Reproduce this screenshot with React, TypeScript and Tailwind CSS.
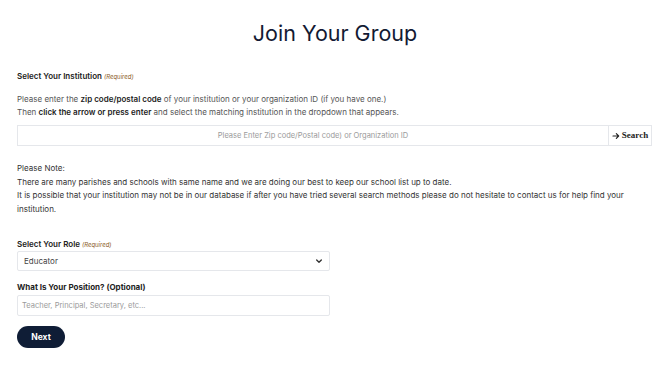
import React from "react";

export default function App() {
  return (
    <div className="w-[670px] h-[375px] bg-white overflow-hidden" style={{ fontFamily: "Inter, 'Noto Sans', sans-serif" }}>
      <div className="px-[17px]">
        <h1 className="text-center text-[21.5px] leading-[28px] text-[#131a33] pt-[19px]">Join Your Group</h1>
        <div className="mt-[23px] text-[8px] font-semibold text-[#222] leading-[12px]">
          Select Your Institution <span className="italic font-normal text-[6px] text-[#8a5a1c]">(Required)</span>
        </div>
        <div className="mt-[10px] text-[8px] leading-[13px] text-[#555]">
          <div>Please enter the <span className="font-semibold text-[#222]">zip code/postal code</span> of your institution or your organization ID (if you have one.)</div>
          <div>Then <span className="font-semibold text-[#222]">click the arrow or press enter</span> and select the matching institution in the dropdown that appears.</div>
        </div>
        <div className="mt-[6px] flex w-[635px] h-[21px]">
          <div className="flex-1 border border-[#e5e7eb] flex items-center justify-center text-[7.5px] text-[#9a9a9a]">
            Please Enter Zip code/Postal code) or Organization ID
          </div>
          <div className="w-[43px] border border-l-0 border-[#e5e7eb] flex items-center justify-center gap-[2px] text-[9px] font-bold text-[#222]" style={{ fontFamily: "'Liberation Serif', serif" }}>
            <svg width="8" height="8" viewBox="0 0 24 24" fill="none" stroke="#222" strokeWidth="3.5" strokeLinecap="round" strokeLinejoin="round"><path d="M3 12h17M13 5l7 7-7 7" /></svg>
            <span>Search</span>
          </div>
        </div>
        <div className="mt-[16px] text-[8px] leading-[13.5px] text-[#333]">
          <div>Please Note:</div>
          <div>There are many parishes and schools with same name and we are doing our best to keep our school list up to date.</div>
          <div className="w-[620px]">It is possible that your institution may not be in our database if after you have tried several search methods please do not hesitate to contact us for help find your institution.</div>
        </div>
        <div className="mt-[22px] text-[8px] font-semibold text-[#222] leading-[12px]">
          Select Your Role <span className="italic font-normal text-[6px] text-[#8a5a1c]">(Required)</span>
        </div>
        <div className="mt-0 w-[313px] h-[20px] border border-[#e5e7eb] rounded-[2px] flex items-center justify-between px-[6px] text-[8px] text-[#444]">
          <span>Educator</span>
          <svg width="8" height="8" viewBox="0 0 24 24" fill="none" stroke="#333" strokeWidth="4" strokeLinecap="round" strokeLinejoin="round"><path d="M5 9l7 7 7-7" /></svg>
        </div>
        <div className="mt-[10px] text-[8px] font-bold text-[#222] leading-[12px]">What Is Your Position? (Optional)</div>
        <div className="mt-[2px] w-[313px] h-[21px] border border-[#e5e7eb] rounded-[2px] flex items-center px-[4px] text-[7.5px] text-[#9a9a9a]">
          Teacher, Principal, Secretary, etc...
        </div>
        <button className="mt-[10px] w-[48px] h-[22px] rounded-full bg-[#0f1d36] text-white text-[8.5px] font-bold">Next</button>
      </div>
    </div>
  );
}
